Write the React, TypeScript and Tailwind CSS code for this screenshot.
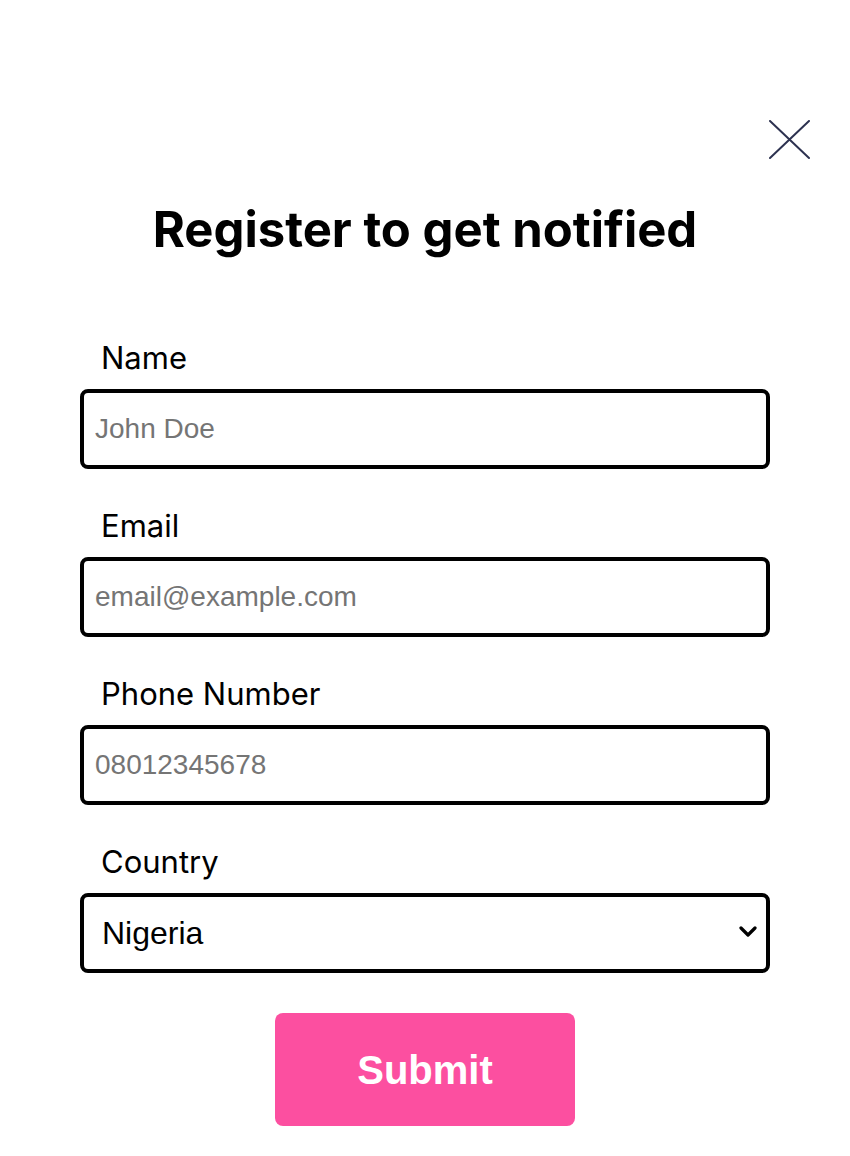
import React from "react";

const labelFont = { fontFamily: "Inter, 'Noto Sans', sans-serif" };
const arial = { fontFamily: "'Liberation Sans', Arial, sans-serif" };

function Field({ label, placeholder }: { label: string; placeholder: string }) {
  return (
    <div className="flex flex-col">
      <label className="h-[40px] pl-[21px] text-[31px] leading-[40px] text-black" style={labelFont}>
        {label}
      </label>
      <input
        placeholder={placeholder}
        className="mt-[11px] h-[80px] w-full rounded-[8px] border-[4px] border-black px-[11px] text-[28px] outline-none placeholder:text-[#757575]"
        style={arial}
      />
    </div>
  );
}

export default function App() {
  return (
    <div className="min-h-[1156px] w-[850px] bg-white">
      <div className="flex justify-end pr-[40px] pt-[120px]">
        <svg width="41" height="40" viewBox="0 0 41 40" fill="none">
          <path d="M1 1L40 38M40 1L1 38" stroke="#2d3250" strokeWidth="2" strokeLinecap="round" />
        </svg>
      </div>
      <h1 className="mt-[40px] text-center text-[49px] font-bold leading-[60px] text-black" style={labelFont}>
        Register to get notified
      </h1>
      <div className="mx-auto mt-[78px] flex w-[690px] flex-col gap-[37px]">
        <Field label="Name" placeholder="John Doe" />
        <Field label="Email" placeholder="email@example.com" />
        <Field label="Phone Number" placeholder="08012345678" />
        <div className="flex flex-col">
          <label className="h-[40px] pl-[21px] text-[31px] leading-[40px] text-black" style={labelFont}>
            Country
          </label>
          <div className="relative mt-[11px]">
            <select
              defaultValue="Nigeria"
              className="h-[80px] w-full appearance-none rounded-[8px] border-[4px] border-black bg-white pl-[18px] pr-[40px] text-[32px] text-black outline-none"
              style={arial}
            >
              <option>Nigeria</option>
              <option>Ghana</option>
              <option>Kenya</option>
            </select>
            <svg className="pointer-events-none absolute right-[13px] top-[33px]" width="18" height="12" viewBox="0 0 18 12" fill="none">
              <path d="M2 2L9 9L16 2" stroke="black" strokeWidth="3.2" strokeLinecap="round" strokeLinejoin="round" />
            </svg>
          </div>
        </div>
        <div className="mt-[3px] flex justify-center">
          <button className="h-[113px] w-[300px] rounded-[8px] bg-[#fc4fa0] text-[40px] font-bold text-white" style={arial}>
            Submit
          </button>
        </div>
      </div>
    </div>
  );
}
